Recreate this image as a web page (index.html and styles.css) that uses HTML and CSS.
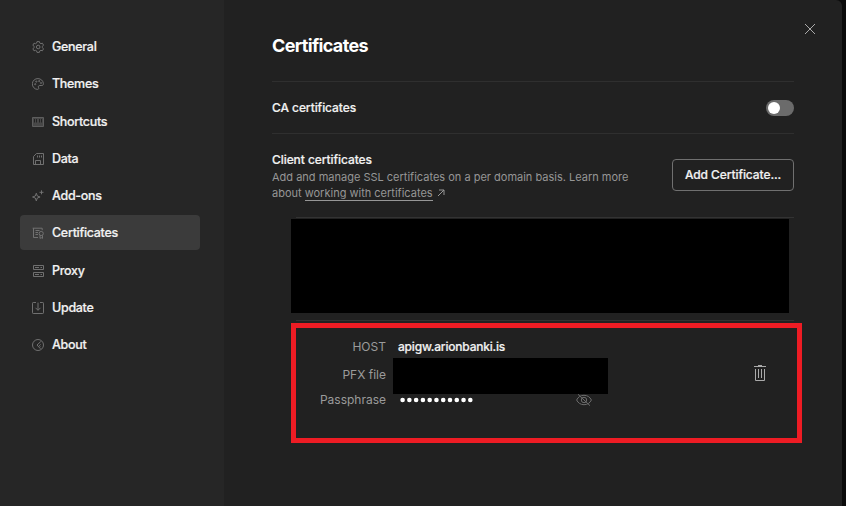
FILE: index.html
```html
<!DOCTYPE html>
<html lang="en">
<head>
<meta charset="utf-8">
<title>Certificates</title>
<link rel="stylesheet" href="styles.css">
</head>
<body>
<div class="modal">
  <nav class="sidebar">
    <a class="nav-item"><svg class="icon" viewBox="0 0 12 12"><path d="M5 .6h2.400l.4 1.500 1.100.6 1.500-.5 1.100 1.900L10.400 5.300v1.400l1.100 1.200-1.100 1.900-1.500-.5-1.100.6-.4 1.500H5l-.4-1.500-1.100-.6-1.500.5L.9 7.900 2 6.700V5.300L.9 4.100 2 2.200l1.500.5 1.100-.6z"/><circle cx="6.200" cy="6" r="1.800"/></svg><span>General</span></a>
    <a class="nav-item"><svg class="icon" viewBox="0 0 12 12"><path d="M11.400 5.700C11.200 2.800 8.900.6 6 .6a5.400 5.400 0 0 0-.5 10.800c1.200.1 1.500-.9 1-1.900-.5-1.200.1-2 1.300-2h2.100c1 0 1.500-.7 1.500-1.800z"/><circle cx="3.200" cy="6.200" r=".6"/><circle cx="4.300" cy="3.600" r=".6"/><circle cx="7.200" cy="3.100" r=".6"/><circle cx="9" cy="5" r=".5"/></svg><span>Themes</span></a>
    <a class="nav-item"><svg class="icon" viewBox="0 0 12 12"><path class="keys" d="M.5 1.500h11v9H.5z"/><path class="slots" d="M2.500 3v3.500M4.500 3v3.500M7.500 3v3.500M9.500 3v3.500"/></svg><span>Shortcuts</span></a>
    <a class="nav-item"><svg class="icon" viewBox="0 0 12 12"><path d="M4.500.5H11.500v11H1.500V3.500zM3.500 11.500v-4h5v4M5.500 2.500v2M7.500 2.500v2M9.500 2.500v2"/></svg><span>Data</span></a>
    <a class="nav-item"><svg class="icon" viewBox="0 0 12 12"><path d="M4.300 3.200 5.300 6l2.800 1-2.800 1-1 2.900-1-2.900-2.800-1 2.800-1zM9.500.3v4M7.500 2.300h4"/></svg><span>Add-ons</span></a>
    <a class="nav-item active"><svg class="icon" viewBox="0 0 12 12"><path d="M6 10.500H1.500V1.200h8.700v2M.6 1.200h1M3.500 3.500h4M3.500 5.500h2.500M3.500 7.500h2.500M8 8.300v3.100l1.200-.7 1.300.7V8.300"/><circle cx="9.200" cy="6.500" r="2.100"/></svg><span>Certificates</span></a>
    <a class="nav-item"><svg class="icon" viewBox="0 0 12 12"><path d="M1.500.5h10v4h-10zM1.500 7.500h10v4h-10zM3 2.500h4M8.500 2.500h1.500M3 9.500h4M8.500 9.500h1.500"/></svg><span>Proxy</span></a>
    <a class="nav-item"><svg class="icon" viewBox="0 0 12 12"><path d="M4 .5H1.200a.7.7 0 0 0-.7.700v9.600a.7.700 0 0 0 .7.700h9.600a.7.700 0 0 0 .7-.7V1.200a.7.700 0 0 0-.7-.7H8M6 .6v7.600M3.500 5.800 6 8.300l2.500-2.500"/></svg><span>Update</span></a>
    <a class="nav-item"><svg class="icon" viewBox="0 0 12 12"><circle cx="6" cy="6" r="5.500"/><path d="M8.800 2.500 5 6l3.500 3.800M8.600 5.400 7.300 6.700l1.200 1"/></svg><span>About</span></a>
  </nav>
  <main class="content">
    <svg class="close" viewBox="0 0 12 12"><path d="m1 1 10 10M11 1 1 11"/></svg>
    <h1>Certificates</h1>
    <section class="ca-row">
      <span class="label">CA certificates</span>
      <span class="toggle"></span>
    </section>
    <section class="client-row">
      <div>
        <div class="label">Client certificates</div>
        <p>Add and manage SSL certificates on a per domain basis. Learn more<br>about <a class="link">working with certificates</a><svg class="arrow" viewBox="0 0 8 8"><path d="M1 7 7 1M2 1h5v5"/></svg></p>
      </div>
      <button><span>Add Certificate...</span></button>
    </section>
    <section class="cert first"><div class="redacted large"></div></section>
    <section class="cert second">
      <dl>
        <dt>HOST</dt><dd class="host">apigw.arionbanki.is</dd>
        <dt>PFX file</dt><dd class="pfx"><div class="redacted small"></div></dd>
        <dt>Passphrase</dt>
        <dd class="pass"><svg class="dots" viewBox="0 0 74 6"><path d="M2.600 3h68"/></svg><svg class="eye" viewBox="0 0 16 12"><path d="M.6 6C2 3 4.700 1.300 8 1.300S14 3 15.400 6C14 9 11.300 10.700 8 10.700S2 9 .6 6zM2 .3l12 11.400"/><circle cx="8" cy="6" r="2.700"/></svg></dd>
      </dl>
      <svg class="trash" viewBox="0 0 12 16"><path d="M0 1.500h12M4 .5h4M1.500 4v11.500h9V4M4.500 4v9M7.500 4v9"/></svg>
      <div class="highlight"></div>
    </section>
  </main>
</div>
</body>
</html>
```
FILE: styles.css
```css
* { box-sizing: border-box; }
body { margin: 0; width: 846px; height: 506px; overflow: hidden; background: #0b0b0b; color: #f2f2f2; font: 500 12px/16px Inter, "Liberation Sans", sans-serif; }
svg { display: block; fill: none; stroke: currentColor; flex: none; }
.modal { display: flex; width: 842px; height: 506px; background: #212121; border-radius: 0 6px 0 0; overflow: hidden; }
.sidebar { display: flex; flex-direction: column; gap: 2.250px; width: 224px; padding: 29px 24px 0 20px; background: #262626; }
.nav-item { display: flex; align-items: center; gap: 8px; height: 35px; padding: 1px 0 0 12px; border-radius: 4px; font-size: 12.500px; letter-spacing: -0.300px; -webkit-text-stroke: .2px #f2f2f2; }
.nav-item.active { background: #3b3b3b; }
.icon { width: 12px; height: 12px; color: #747474; stroke-width: .95; }
.keys { fill: #484848; stroke: #606060; }
.slots { stroke: #222; }
.content { position: relative; width: 618px; padding: 34px 48px 0; }
.close { position: absolute; left: 580px; top: 23px; width: 12px; height: 12px; color: #aaa; }
h1 { margin: 0; height: 47px; font-size: 18px; line-height: 24px; font-weight: 700; letter-spacing: -0.660px; color: #fff; }
.ca-row { display: flex; align-items: center; justify-content: space-between; height: 52px; border-top: 1px solid #2f2f2f; }
.label { letter-spacing: -0.070px; -webkit-text-stroke: .2px #f2f2f2; }
.toggle { width: 28px; height: 16px; padding: 2px; border-radius: 8px; background: #6b6b6b; }
.toggle::before { content: ""; display: block; width: 12px; height: 12px; border-radius: 50%; background: #fff; }
.client-row { display: flex; justify-content: space-between; height: 84px; padding-top: 18px; border-top: 1px solid #2f2f2f; }
p { margin: 1px 0 0; font-size: 11px; line-height: 16px; font-weight: 400; color: #969696; white-space: nowrap; }
.link { border-bottom: 1px solid #969696; }
.arrow { display: inline-block; width: 8px; height: 8px; margin-left: 4px; }
button { width: 122px; height: 32px; margin-top: 7px; padding: 0 0 1px; border: 1px solid #707070; border-radius: 4px; background: none; color: #f2f2f2; font: 500 12px Inter, sans-serif; letter-spacing: -0.080px; white-space: nowrap; -webkit-text-stroke: .2px #f2f2f2; }
.cert { position: relative; margin-left: 24px; border-top: 1px solid #333; }
.first { height: 103px; }
.redacted { position: absolute; background: #000; }
.large { left: -5px; top: 1px; width: 498px; height: 94px; }
.second { display: flex; height: 124px; padding-top: 18px; }
dl { display: grid; grid-template-columns: 90px 200px; grid-template-rows: 28px 25px 16px; column-gap: 12px; margin: 0; }
dt { text-align: right; font-weight: 400; color: #9b9b9b; }
dd { margin: 0; }
.host { letter-spacing: -0.200px; -webkit-text-stroke: .2px #f2f2f2; }
.pfx { position: relative; }
.small { left: -5px; top: -9px; width: 215px; height: 36px; }
.pass { display: flex; align-items: center; height: 16px; }
.dots { width: 74px; height: 6px; margin-left: 2px; stroke-width: 4.600; stroke-linecap: round; stroke-dasharray: 0 6.770; color: #fff; }
.eye { width: 16px; height: 12px; margin-left: 102px; color: #6c6c6c; }
.trash { width: 12px; height: 16px; margin: 26px 0 0 156px; color: #aaa; }
.highlight { position: absolute; left: -5px; top: 2px; width: 511px; height: 120px; border: 5px solid #ee1c24; }
```
